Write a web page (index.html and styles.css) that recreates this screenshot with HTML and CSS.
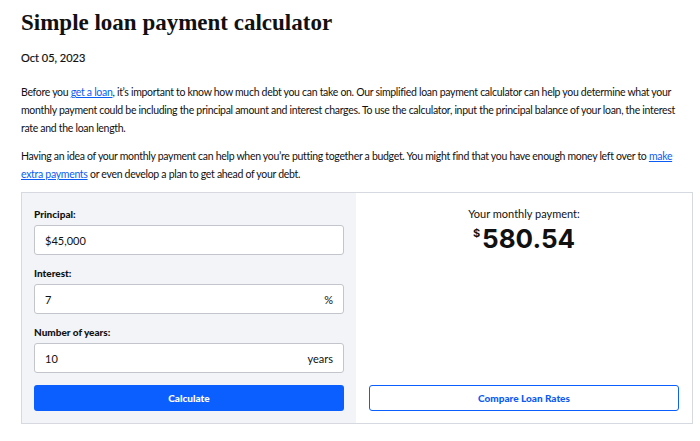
FILE: index.html
```html
<!DOCTYPE html>
<html lang="en">
<head>
  <meta charset="UTF-8">
  <meta name="viewport" content="width=device-width, initial-scale=1.0">
  <link rel="stylesheet" href="styles.css">
  <title>Simple loan payment calculator</title>
</head>
<body>
  <div class="article">
    <h1 class="title">Simple loan payment calculator</h1>
    <div class="date">Oct 05, 2023</div>

    <p>Before you <a href="#">get a loan</a>, it’s important to know how much debt you can take on. Our simplified loan payment calculator can help you determine what your monthly payment could be including the principal amount and interest charges. To use the calculator, input the principal balance of your loan, the interest rate and the loan length.</p>

    <p>Having an idea of your monthly payment can help when you’re putting together a budget. You might find that you have enough money left over to <a href="#">make extra payments</a> or even develop a plan to get ahead of your debt.</p>

    <div class="calculator">
      <div class="inputs">
        <label class="field-label">Principal:</label>
        <div class="field">
          <span class="field-value">$45,000</span>
        </div>

        <label class="field-label">Interest:</label>
        <div class="field">
          <span class="field-value">7</span>
          <span class="field-unit">%</span>
        </div>

        <label class="field-label">Number of years:</label>
        <div class="field">
          <span class="field-value">10</span>
          <span class="field-unit">years</span>
        </div>

        <button class="btn-primary">Calculate</button>
      </div>

      <div class="result">
        <div class="result-label">Your monthly payment:</div>
        <div class="result-amount"><sup>$</sup>580.54</div>
        <button class="btn-outline">Compare Loan Rates</button>
      </div>
    </div>
  </div>
</body>
</html>
```

FILE: styles.css
```css
body {
  margin: 0;
  font-family: Lato, "Liberation Sans", sans-serif;
  color: #111;
  background-color: #fff;
}

.article {
  padding: 0 8px 0 21px;
}

.title {
  font-family: "Liberation Serif", serif;
  font-size: 23px;
  font-weight: bold;
  margin: 0;
  padding-top: 8px;
  line-height: 30px;
}

.date {
  font-size: 11px;
  margin-top: 13px;
  -webkit-text-stroke: 0.2px #111;
}

p {
  font-size: 10.5px;
  letter-spacing: -0.3px;
  line-height: 18px;
  margin: 19px 0 0 0;
}

p + p {
  margin-top: 10px;
}

a {
  color: #0b5cf5;
}

.calculator {
  display: flex;
  border: 1px solid #d7d9e0;
  margin-top: 9px;
  width: 670px;
}

.inputs {
  width: 310px;
  background-color: #f3f4f7;
  padding: 15px 12px 12px 12px;
  display: flex;
  flex-direction: column;
}

.field-label {
  font-size: 10px;
  font-weight: 900;
  line-height: 12px;
  margin-bottom: 5px;
}

.field {
  box-sizing: border-box;
  display: flex;
  justify-content: space-between;
  align-items: center;
  height: 30px;
  background-color: #fff;
  border: 1px solid #c3c5cc;
  border-radius: 3px;
  padding: 0 10px;
  font-size: 11px;
  margin-bottom: 12px;
}

.btn-primary {
  height: 26px;
  background-color: #0b5fff;
  color: #fff;
  border: none;
  border-radius: 3px;
  font-family: inherit;
  font-size: 10px;
  font-weight: 900;
}

.result {
  flex: 1;
  display: flex;
  flex-direction: column;
  align-items: center;
  padding: 14px 13px 12px 13px;
}

.result-label {
  font-size: 11px;
  line-height: 14px;
}

.result-amount {
  font-family: Inter, "Liberation Sans", sans-serif;
  font-size: 26px;
  font-weight: bold;
  line-height: 30px;
  margin-top: 3px;
}

.result-amount sup {
  font-size: 11px;
  vertical-align: top;
  line-height: 18px;
  margin-right: 2px;
}

.btn-outline {
  margin-top: auto;
  width: 100%;
  height: 26px;
  background-color: #fff;
  color: #0b5cf5;
  border: 1.5px solid #0b5fff;
  border-radius: 3px;
  font-family: inherit;
  font-size: 10px;
  font-weight: 900;
}
```
